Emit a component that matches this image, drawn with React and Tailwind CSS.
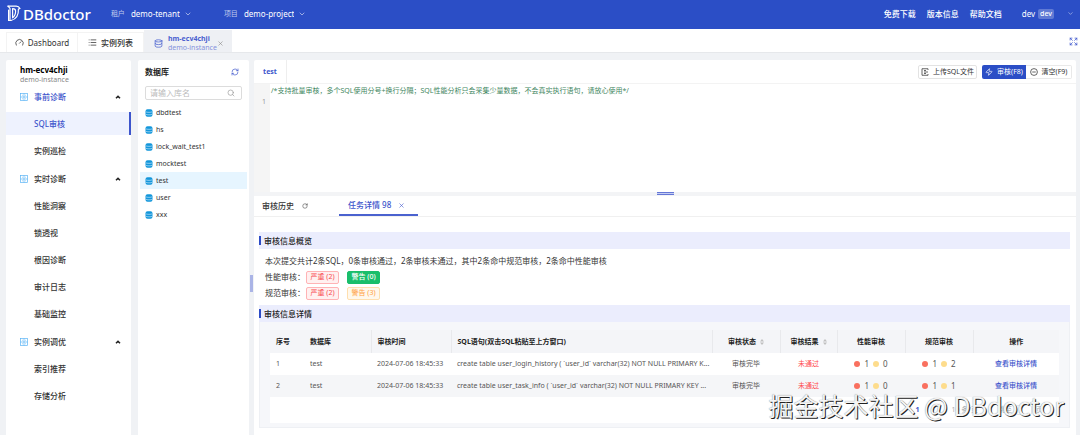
import { useState } from "react"
import { ChevronDown, Database, Expand, Gauge, List, RefreshCw, RotateCw, Search, X, Zap } from "lucide-react"

const FONT = "font-['Noto_Sans','Noto_Sans_CJK_SC',sans-serif]"

const MENU = [
  { title: "事前诊断", items: ["SQL审核", "实例巡检"] },
  { title: "实时诊断", items: ["性能洞察", "锁透视", "根因诊断", "审计日志", "基础监控"] },
  { title: "实例调优", items: ["索引推荐", "存储分析"] },
]

const DATABASES = ["dbdtest", "hs", "lock_wait_test1", "mocktest", "test", "user", "xxx"]

const ROWS = [
  { id: 1, db: "test", time: "2024-07-06 18:45:33", sql: "create table user_login_history ( `user_id` varchar(32) NOT NULL PRIMARY K...", perf: [1, 0], norm: [1, 2] },
  { id: 2, db: "test", time: "2024-07-06 18:45:33", sql: "create table user_task_info ( `user_id` varchar(32) NOT NULL PRIMARY KEY ...", perf: [1, 0], norm: [1, 1] },
]

const HINT = "/*支持批量审核，多个SQL使用分号+换行分隔；SQL性能分析只会采集少量数据，不会真实执行语句，请放心使用*/"

function Logo() {
  return (
    <svg viewBox="0 0 14 17" className="w-[14px] h-[17px]" fill="none" stroke="currentColor" strokeWidth="1.2" strokeLinecap="round" strokeLinejoin="round">
      <path d="M1 1.2h8.2c2 .1 3.2 1.3 3.8 2.3l-1.6.6c.3 5.200-1.700 9.900-7.400 11.400H1.600" />
      <path d="M1 1.200l2 2.200v12M5.600 3.600v9.200M5.600 3.600c1.800.1 3 .8 3 2.400 0 3-.8 5.400-3 6.800" />
      <path d="M1.600 15.500V5" />
    </svg>
  )
}

function GroupIcon() {
  return (
    <svg viewBox="0 0 16 16" className="w-2 h-2 text-[#5bb4f5]" fill="none" stroke="currentColor" strokeWidth="1.4">
      <rect x="1" y="1" width="14" height="14" />
      <path d="M8 1v14M1 8h14M4 4.500h1.500M10.500 4.500H12M4 11.500h1.500M10.500 11.500H12" />
    </svg>
  )
}

function Caret({ flipped }) {
  return (
    <svg viewBox="0 0 12 12" className={`w-[6px] h-[6px] ml-auto ${flipped ? "rotate-180" : ""}`} fill="none" stroke="#222" strokeWidth="3">
      <path d="M2 8.500l4-4 4 4" />
    </svg>
  )
}

function DbIcon() {
  return (
    <svg viewBox="0 0 16 16" className="w-2 h-2 shrink-0">
      <rect x="1" y="0.500" width="14" height="15" rx="4" fill="#1296db" />
      <path d="M1 5.500c3 1.600 11 1.600 14 0M1 10.500c3 1.600 11 1.600 14 0" fill="none" stroke="#bfe3f8" strokeWidth="1.400" />
    </svg>
  )
}

function UploadIcon() {
  return (
    <svg viewBox="0 0 16 16" className="w-2 h-2" fill="none" stroke="currentColor" strokeWidth="1.500">
      <path d="M14 4V1.500H2v13h12V12M6 5h4M6 8h8M6 11h4" />
    </svg>
  )
}

function ClearIcon() {
  return (
    <svg viewBox="0 0 16 16" className="w-2 h-2" fill="none" stroke="currentColor" strokeWidth="1.500">
      <circle cx="8" cy="8" r="6.800" />
      <path d="M4.500 8h7" />
    </svg>
  )
}

function Sorter() {
  return (
    <svg viewBox="0 0 8 12" className="inline-block w-1 h-[6px] ml-1 align-middle" fill="#bfbfbf">
      <path d="M4 0l4 5H0zM4 12l4-5H0z" />
    </svg>
  )
}

function HeaderSelect({ id, label, value }) {
  return (
    <div className="flex items-center">
      <label htmlFor={id} className="text-[7px] text-white/70 mr-[6px]">{label}</label>
      <select id={id} defaultValue={value} className="appearance-none field-sizing-content bg-transparent outline-none text-white">
        <option>{value}</option>
      </select>
      <ChevronDown className="w-2 h-2 ml-1 text-white/80" />
    </div>
  )
}

function Tag({ className, children }) {
  return <span className={`inline-flex items-center justify-center w-[33px] h-[13px] rounded-xs border text-[7px] ${className}`}>{children}</span>
}

function Counts({ values }) {
  return (
    <span className="inline-flex items-center gap-1 text-[8px]">
      <i className="w-[6px] h-[6px] rounded-full bg-[#f9705f]" />
      {values[0]}
      <i className="w-[6px] h-[6px] rounded-full bg-[#fddc8c]" />
      {values[1]}
    </span>
  )
}

function SectionTitle({ children }) {
  return (
    <h2 className="flex items-center h-[17px] bg-[#ebedfd] text-[8px] font-medium text-[#222]">
      <i className="w-[2px] h-[9px] mr-[3px] bg-[#2c4bc6]" />
      {children}
    </h2>
  )
}

export default function App() {
  const [active, setActive] = useState("SQL审核")
  const [db, setDb] = useState("test")
  const [closed, setClosed] = useState({})
  const [sql, setSql] = useState(HINT)

  const toggle = (title) => setClosed((c) => ({ ...c, [title]: !c[title] }))

  return (
    <div className={`${FONT} relative min-h-screen flex flex-col bg-[#f0f2f5] text-[8px] leading-[12px] text-[#333] overflow-hidden`}>
      {/* Header */}
      <header className="flex items-center h-[29px] shrink-0 pl-[7px] pr-[6px] pb-[2px] bg-[#2b4ec6] text-white">
        <Logo />
        <span className="ml-[2px] mr-5 text-[15px] leading-[20px] font-medium">DBdoctor</span>
        <div className="flex items-center gap-8">
          <HeaderSelect id="tenant" label="租户" value="demo-tenant" />
          <HeaderSelect id="project" label="项目" value="demo-project" />
        </div>
        <nav className="flex gap-[11px] ml-auto font-medium">
          <a href="#download">免费下载</a>
          <a href="#version">版本信息</a>
          <a href="#docs">帮助文档</a>
        </nav>
        <button className="flex items-center ml-5">
          dev
          <span className="ml-[3px] px-[2px] rounded-xs bg-white/25 text-[7px] leading-[10px] font-medium">dev</span>
          <ChevronDown className="w-[7px] h-[7px] ml-[13px] text-white/70" />
        </button>
      </header>

      {/* Page tabs */}
      <div className="flex items-end h-6 shrink-0 pl-[6px] pr-[2px] bg-white border-b border-[#e6e8eb]">
        <button className="flex items-center justify-center gap-1 w-[72px] h-5 border border-b-0 border-[#f3f3f3]">
          <Gauge className="w-[9px] h-[9px]" />
          Dashboard
        </button>
        <button className="flex items-center justify-center gap-1 w-[66px] h-5 border border-l-0 border-b-0 border-[#f3f3f3] font-medium">
          <List className="w-[9px] h-[9px]" />
          实例列表
        </button>
        <div className="flex items-center w-[88px] h-[22px] pt-1 pl-[10px] bg-[#eef0f4]">
          <Database className="w-[9px] h-[9px] text-[#4a62cf]" />
          <button className="ml-[5px] text-left text-[7px] leading-[9px]">
            <span className="block font-bold text-[#4a5fd0]">hm-ecv4chji</span>
            <span className="block text-[#8593dd]">demo-instance</span>
          </button>
          <button aria-label="关闭" className="text-[#888]"><X className="w-[7px] h-[7px]" /></button>
        </div>
        <button aria-label="全屏" className="ml-auto mb-[6px] text-[#3d55cc]"><Expand className="w-[9px] h-[9px]" /></button>
      </div>

      <div className="flex flex-1 pt-[7px] pl-[6px] pr-1">
        {/* Menu */}
        <aside className="w-[125px] shrink-0 mr-[7px] bg-white rounded-t-xs">
          <div className="pt-1 pl-[14px] h-[23px]">
            <p className="font-bold text-black">hm-ecv4chji</p>
            <p className="text-[7px] leading-[8px] text-[#888]">demo-instance</p>
          </div>
          <nav className="flex flex-col gap-px">
            {MENU.map((g) => (
              <div key={g.title}>
                <button
                  onClick={() => toggle(g.title)}
                  className={`flex items-center w-full h-[27px] pl-[14px] pr-[10px] font-medium ${g.items.includes(active) ? "text-[#3d55cc]" : "text-[#333]"}`}
                >
                  <GroupIcon />
                  <span className="ml-[6px]">{g.title}</span>
                  <Caret flipped={closed[g.title]} />
                </button>
                {!closed[g.title] && g.items.map((item) => (
                  <div key={item} className="h-[27px] py-[2px]">
                    <button
                      onClick={() => setActive(item)}
                      className={`w-full h-full pl-7 text-left font-medium ${item === active ? "bg-[#eef2fe] text-[#3d55cc] border-r-2 border-[#3d55cc]" : ""}`}
                    >
                      {item}
                    </button>
                  </div>
                ))}
              </div>
            ))}
          </nav>
        </aside>

        {/* Databases */}
        <section className="w-[111px] shrink-0 bg-white rounded-t-xs">
          <div className="flex items-center h-6 pl-[7px] pr-[10px]">
            <h2 className="font-bold text-[8px] text-[#222]">数据库</h2>
            <button aria-label="刷新" className="ml-auto text-[#3d55cc]"><RefreshCw className="w-2 h-2" /></button>
          </div>
          <div className="flex items-center h-[14px] mt-[2px] mx-[7px] pl-1 pr-[6px] border border-[#dcdcdc] rounded-xs">
            <input aria-label="库名" placeholder="请输入库名" className="flex-1 min-w-0 outline-none placeholder:text-[#bbb]" />
            <Search className="w-2 h-2 text-[#999]" />
          </div>
          <ul className="mt-1 mx-[2px] text-[7px]">
            {DATABASES.map((name) => (
              <li key={name}>
                <button
                  onClick={() => setDb(name)}
                  className={`flex items-center gap-[3px] w-full h-[17px] pl-[5px] ${name === db ? "bg-[#e6f5ff]" : ""}`}
                >
                  <DbIcon />
                  {name}
                </button>
              </li>
            ))}
          </ul>
        </section>

        <div className="flex items-center w-[5px] shrink-0 pt-[72px]">
          <i className="w-[3px] h-[17px] ml-px bg-[#aab4e6]" />
        </div>

        {/* Workspace */}
        <main className="flex-1 min-w-0 flex flex-col bg-white rounded-t-xs">
          <div className="flex items-center h-6 pr-1 border-b border-[#f3f3f3]">
            <button className="h-full w-[33px] border-r border-[#eee] text-[7px] font-bold text-[#3d55cc]">test</button>
            <div className="flex items-center ml-auto text-[7px]">
              <button className="flex items-center justify-center gap-1 w-[59px] h-[14px] border border-[#e3e3e3] rounded-xs"><UploadIcon />上传SQL文件</button>
              <button className="flex items-center justify-center gap-1 w-11 h-[14px] ml-[5px] bg-[#2b4ec6] rounded-l-xs text-white"><Zap className="w-2 h-2" />审核(F8)</button>
              <button className="flex items-center justify-center gap-1 w-[46px] h-[14px] border border-l-0 border-[#e9e9e9] rounded-r-xs"><ClearIcon />清空(F9)</button>
            </div>
          </div>

          <div className="flex h-[108px]">
            <div className="w-4 shrink-0 pt-3 pr-1 bg-[#f5f5f5] text-right text-[7px] text-[#999]">1</div>
            <textarea
              aria-label="SQL"
              value={sql}
              onChange={(e) => setSql(e.target.value)}
              spellCheck={false}
              className="flex-1 pl-px resize-none outline-none text-[7px] leading-[14px] text-[#3f8762]"
            />
          </div>
          <div className="flex justify-center h-1 bg-[#f3f4f6]">
            <i className="w-[17px] h-[3px] border-y border-[#6577d6] bg-[#c5cdf2]" />
          </div>

          <div className="flex h-[21px] border-b border-[#f0f0f0]">
            <button className="flex items-center gap-[8px] w-[85px] pl-2 font-medium">审核历史<RotateCw className="w-[6px] h-[6px]" /></button>
            <div className="flex items-center gap-[7px] w-[79px] pl-[9px] border-b-2 border-[#4a62cf] font-medium text-[#3d55cc]">
              <button>任务详情 98</button>
              <button aria-label="关闭"><X className="w-[7px] h-[7px]" /></button>
            </div>
          </div>

          <div className="pt-[15px] pl-[5px] pr-[6px]">
            <SectionTitle>审核信息概览</SectionTitle>
            <div className="pl-[6px] pt-[6px] pb-1">
              <p>本次提交共计2条SQL，0条审核通过，2条审核未通过，其中2条命中规范审核，2条命中性能审核</p>
              <div className="flex items-center h-4 mt-[2px]">
                <span className="w-[41px]">性能审核：</span>
                <Tag className="bg-[#fff0f0] border-[#ffb3b5] text-[#f8484f]">严重 (2)</Tag>
                <Tag className="ml-2 bg-[#19be6b] border-[#19be6b] text-white font-medium">警告 (0)</Tag>
              </div>
              <div className="flex items-center h-4">
                <span className="w-[41px]">规范审核：</span>
                <Tag className="bg-[#fff0f0] border-[#ffb3b5] text-[#f8484f]">严重 (2)</Tag>
                <Tag className="ml-2 bg-[#fff8ec] border-[#ffdfae] text-[#ff9f3f]">警告 (3)</Tag>
              </div>
            </div>
            <SectionTitle>审核信息详情</SectionTitle>
            <div className="px-[10px] pt-2 pb-1 bg-[#f6f7fa] border border-t-0 border-[#eef0f4]">
              <table className="w-full table-fixed text-[7px] text-[#555]">
                <colgroup>
                  <col className="w-[34px]" />
                  <col className="w-[67px]" />
                  <col className="w-20" />
                  <col />
                  <col className="w-[68px]" />
                  <col className="w-[57px]" />
                  <col className="w-[68px]" />
                  <col className="w-[68px]" />
                  <col className="w-[86px]" />
                </colgroup>
                <thead className="bg-[#f4f5f8] text-[#222]">
                  <tr className="h-[23px]">
                    <th className="pl-[6px] text-left font-bold">序号</th>
                    <th className="pl-[6px] text-left font-bold">数据库</th>
                    <th className="pl-[6px] text-left font-bold border-l border-[#e8e9ec]">审核时间</th>
                    <th className="pl-[6px] text-left font-bold border-l border-[#e8e9ec]">SQL语句(双击SQL粘贴至上方窗口)</th>
                    <th className="font-bold border-l border-[#e8e9ec]">审核状态<Sorter /></th>
                    <th className="font-bold border-l border-[#e8e9ec]">审核结果<Sorter /></th>
                    <th className="font-bold border-l border-[#e8e9ec]">性能审核</th>
                    <th className="font-bold border-l border-[#e8e9ec]">规范审核</th>
                    <th className="font-bold border-l border-[#e8e9ec]">操作</th>
                  </tr>
                </thead>
                <tbody>
                  {ROWS.map((r) => (
                    <tr key={r.id} className="h-[22px] bg-white even:bg-[#f5f6f8] text-center">
                      <td className="pl-[6px] text-left">{r.id}</td>
                      <td className="pl-[6px] text-left">{r.db}</td>
                      <td className="pl-[6px] text-left whitespace-nowrap">{r.time}</td>
                      <td className="pl-[6px] text-left whitespace-nowrap">{r.sql}</td>
                      <td>审核完毕</td>
                      <td className="text-[#ff4d4f]">未通过</td>
                      <td><Counts values={r.perf} /></td>
                      <td><Counts values={r.norm} /></td>
                      <td><a href={`#task-${r.id}`} className="text-[#3d55cc] font-medium">查看审核详情</a></td>
                    </tr>
                  ))}
                </tbody>
              </table>
              <div className="flex items-center justify-end h-[26px] pr-4 bg-white text-[7px] text-[#aaa]">
                <button className="mr-8 font-bold text-[#3d55cc]">1</button>
                <select aria-label="每页条数" className="appearance-none field-sizing-content mr-5 outline-none">
                  <option>10 条/页</option>
                </select>
                <label htmlFor="page">跳至</label>
                <input id="page" className="w-4 h-[10px] mx-1 border border-[#e5e5e5] rounded-xs" />
                页
              </div>
            </div>
          </div>
        </main>
      </div>

      <p className="absolute right-4 bottom-[14px] font-['Noto_Sans_CJK_SC',sans-serif] text-[25px] leading-[32px] text-[#f4f4f4] pointer-events-none [text-shadow:1px_1px_0_#222,0_0_1px_#777]">
        掘金技术社区 @ DBdoctor
      </p>
    </div>
  )
}
